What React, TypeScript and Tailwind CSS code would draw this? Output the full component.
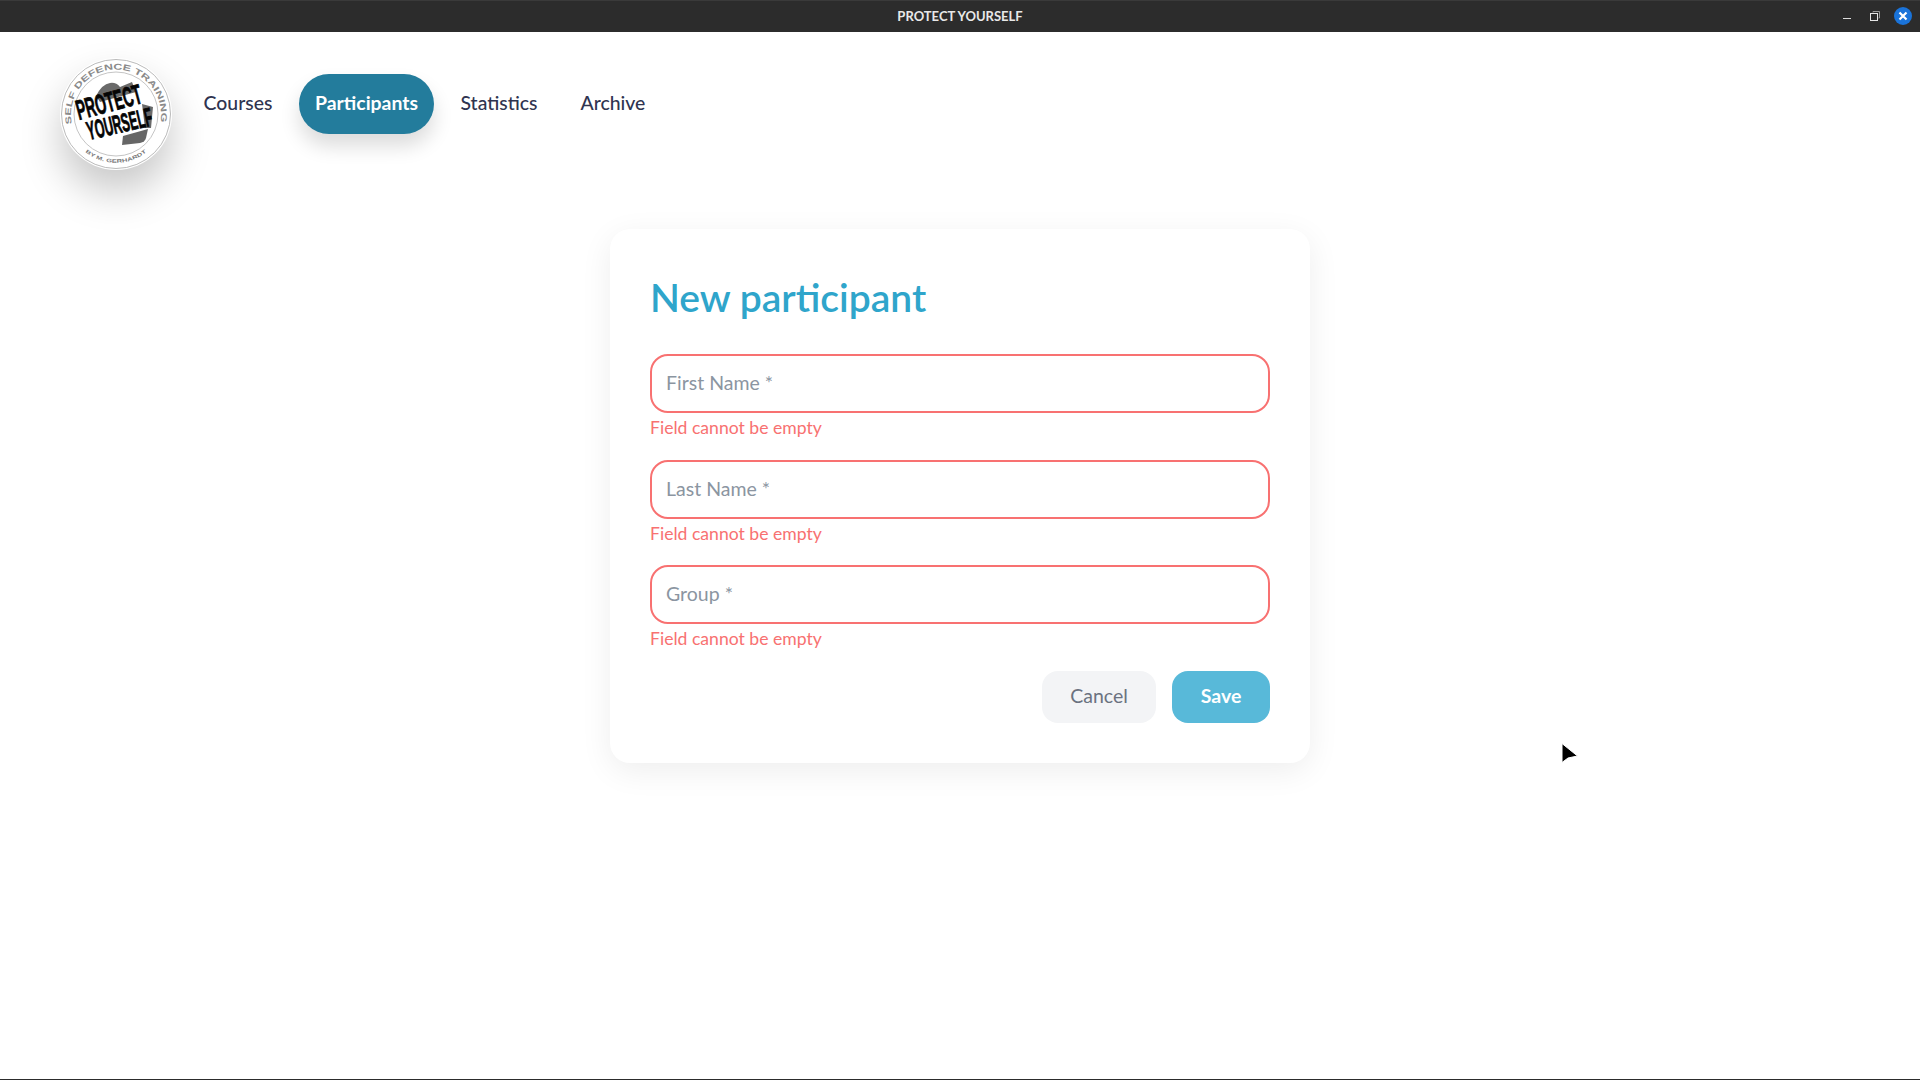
import React from 'react'

const font = "font-['Lato','Noto_Sans',sans-serif]"

function Logo() {
  return (
    <div className="w-[112px] h-[112px] rounded-full bg-white shadow-[0_22px_40px_rgba(0,0,0,0.22)] flex-shrink-0">
      <svg viewBox="0 0 112 112" width="112" height="112">
        <circle cx="56" cy="56" r="54.5" fill="none" stroke="#a8a8a8" strokeWidth="0.8" />
        <circle cx="56" cy="56" r="42" fill="none" stroke="#b5b5b5" strokeWidth="0.8" />
        <defs>
          <path id="ringTop" d="M 12 66 A 45 45 0 1 1 100 66" />
          <path id="ringBottom" d="M 23 92 A 49 49 0 0 0 89 92" />
        </defs>
        <text fontFamily="Liberation Sans, sans-serif" fontSize="8.4" fontWeight="700" fill="#8a8a8a">
          <textPath href="#ringTop" textLength="158" lengthAdjust="spacingAndGlyphs">SELF DEFENCE TRAINING</textPath>
        </text>
        <text fontFamily="Liberation Sans, sans-serif" fontSize="5" fontWeight="700" fill="#777">
          <textPath href="#ringBottom" startOffset="3" textLength="66" lengthAdjust="spacingAndGlyphs">BY M. GERHARDT</textPath>
        </text>
        {/* fist: knuckles, back of the hand and thumb around the lettering */}
        <path d="M36 38 Q42 26 50 25 Q56 24 60 29 L72 24 L76 34 L40 44 Z" fill="#6a6a6a" />
        <path d="M82 46 L93 49 L91 70 L85 70 Z" fill="#6a6a6a" />
        <path d="M62 87 L63 78 L88 71 L86 80 Q85 84 80 85 Z" fill="#666" />
        <g fontFamily="Liberation Sans, sans-serif" fontWeight="700" fill="#050505" stroke="#050505" strokeWidth="0.8">
          <text transform="translate(19 62) rotate(-15) scale(0.5 1)" fontSize="28">PROTECT</text>
          <text transform="translate(29 82) rotate(-13) scale(0.47 1)" fontSize="26">YOURSELF</text>
        </g>
      </svg>
    </div>
  )
}

function Field({ label, rowClass }: { label: string; rowClass: string }) {
  return (
    <div className={rowClass}>
      <input
        readOnly
        placeholder={label}
        className="block w-full h-[59px] px-[14px] pb-[3px] rounded-[18px] border-2 border-[#f87171] bg-white text-[19.5px] outline-none placeholder:text-[#8b95a1]"
      />
      <p className="mt-[1px] text-[#f87171] text-[17.6px] leading-[27px]">Field cannot be empty</p>
    </div>
  )
}

export default function App() {
  return (
    <div className={`${font} h-screen flex flex-col bg-white overflow-hidden relative`}>
      {/* Title bar */}
      <div className="h-8 flex-shrink-0 bg-[#2c2c2c] border-t border-[#3a3a3a] flex items-center relative">
        <span className="mx-auto text-[13px] font-bold text-[#e8e8e8]">PROTECT YOURSELF</span>
        <div className="absolute right-[8px] top-[6px] flex items-center">
          <span className="w-2 h-px bg-[#dcdcdc] mt-[5px] mr-[19px]" />
          <svg width="10" height="10" viewBox="0 0 10 10" className="mr-[14px]" fill="none">
            <path d="M3 1.5 V0.5 H9.5 V7 H8.5" stroke="#9a9a9a" />
            <rect x="0.5" y="2.5" width="7" height="7" stroke="#e6e6e6" />
          </svg>
          <span className="w-[18px] h-[18px] rounded-full bg-[#1a73d9] flex items-center justify-center">
            <svg width="10" height="10" viewBox="0 0 10 10">
              <path d="M1.5 1.5 L8.5 8.5 M8.5 1.5 L1.5 8.5" stroke="#fff" strokeWidth="2.2" />
            </svg>
          </span>
        </div>
      </div>

      {/* Nav */}
      <nav className="flex items-start pl-[60px] pt-[26px] h-[197px] flex-shrink-0">
        <Logo />
        <div className="flex items-center gap-[10px] ml-[15px] mt-[16px] text-[19.4px] font-medium text-[#2f3450]">
          <a className="w-[102px] h-[60px] pb-[2px] flex items-center justify-center">Courses</a>
          <a className="w-[135px] h-[60px] pb-[2px] flex items-center justify-center rounded-[30px] bg-[#237c9c] text-white font-bold shadow-[0_12px_20px_rgba(0,0,0,0.14)]">
            Participants
          </a>
          <a className="w-[110px] h-[60px] pb-[2px] flex items-center justify-center">Statistics</a>
          <a className="w-[98px] h-[60px] pb-[2px] flex items-center justify-center">Archive</a>
        </div>
      </nav>

      {/* Form card */}
      <main className="flex-1 flex justify-center items-start">
        <form className="w-[700px] h-[534px] rounded-[20px] bg-white p-10 shadow-[0_8px_32px_rgba(0,0,0,0.07)]">
          <h1 className="mb-7 text-[39px] leading-[57px] font-semibold text-[#2fa5cb]">New participant</h1>
          <Field label="First Name *" rowClass="h-[106px]" />
          <Field label="Last Name *" rowClass="h-[105px]" />
          <Field label="Group *" rowClass="h-[106px]" />
          <div className="flex justify-end gap-4">
            <button type="button" className="w-[114px] h-[52px] pb-[2px] rounded-[16px] bg-[#f3f4f6] text-[19.5px] text-[#6b7280]">Cancel</button>
            <button type="button" className="w-[98px] h-[52px] pb-[2px] rounded-[16px] bg-[#58b9d9] text-[19.5px] font-bold text-white">Save</button>
          </div>
        </form>
      </main>
      <div className="h-px flex-shrink-0 bg-[#2c2c2c]" />

      {/* Mouse pointer */}
      <svg className="absolute left-[1560px] top-[740px]" width="20" height="26" viewBox="0 0 20 26">
        <path d="M2 3.5 L2 22.5 L8 18 L17.5 16 Z" fill="#000" stroke="#fff" strokeWidth="1" />
      </svg>
    </div>
  )
}
